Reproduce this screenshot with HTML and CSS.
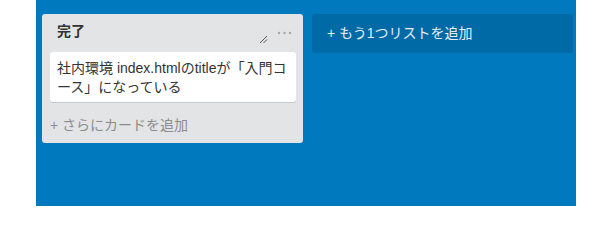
FILE: index.html
```html
<!DOCTYPE html>
<html lang="ja">
<head>
<meta charset="utf-8">
<link rel="stylesheet" href="styles.css">
</head>
<body>
<div class="board">
  <div class="list">
    <div class="list-header">
      <div class="list-title">完了</div>
      <svg class="resize" width="9" height="9" viewBox="0 0 9 9"><path d="M1 8 L8 1 M4.5 8 L8 4.5" stroke="#555" stroke-width="1" fill="none"/></svg>
      <svg class="menu" width="15" height="4" viewBox="0 0 15 4"><circle cx="2" cy="2" r="1.2" fill="#a5a5a5"/><circle cx="7.5" cy="2" r="1.2" fill="#a5a5a5"/><circle cx="13" cy="2" r="1.2" fill="#a5a5a5"/></svg>
    </div>
    <div class="cards">
      <div class="card">社内環境 index.htmlのtitleが「入門コース」になっている</div>
    </div>
    <div class="add-card">+ さらにカードを追加</div>
  </div>
  <div class="add-list">+ もう1つリストを追加</div>
</div>
</body>
</html>
```
FILE: styles.css
```css
html, body {
  margin: 0;
  padding: 0;
  background: #ffffff;
  height: 206px;
  overflow: hidden;
}
body {
  font-family: "Liberation Sans", "Noto Sans CJK JP", sans-serif;
  font-size: 14px;
}
.board {
  margin-left: 36px;
  width: 534px;
  height: 192px;
  background: #0079bf;
  padding: 14px 0 0 6px;
  display: flex;
  align-items: flex-start;
  gap: 9px;
}
.list {
  width: 261px;
  background: #e2e4e6;
  border-radius: 3px;
  display: flex;
  flex-direction: column;
}
.list-header {
  height: 38px;
  display: flex;
  align-items: flex-start;
  padding: 0 11px 0 15px;
  box-sizing: border-box;
}
.list-title {
  flex: 1;
  font-weight: bold;
  color: #333;
  line-height: 19px;
  padding-top: 8px;
}
.resize {
  margin-top: 21px;
  margin-right: 9px;
}
.menu {
  margin-top: 17px;
}
.cards {
  padding: 0 7px 0 8px;
}
.card {
  background: #fff;
  border-radius: 3px;
  box-shadow: 0 1px 0 #c4c9cc;
  padding: 7px 7px 5px 7px;
  line-height: 19px;
  color: #333;
}
.add-card {
  height: 41px;
  line-height: 19px;
  padding: 14px 8px 0 8px;
  box-sizing: border-box;
  color: #8c8c8c;
}
.add-list {
  width: 261px;
  height: 39px;
  box-sizing: border-box;
  background: #006aa7;
  border-radius: 3px;
  color: #e4eef5;
  padding: 10px 15px 0 15px;
  line-height: 19px;
}
```
